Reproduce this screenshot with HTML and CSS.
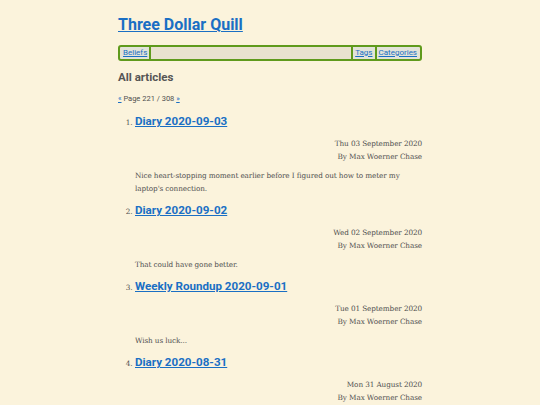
FILE: index.html
```html
<!DOCTYPE html>
<html>
<head>
<meta charset="utf-8">
<link rel="stylesheet" href="styles.css">
</head>
<body>
<div class="page">
  <h1 class="site-title"><a href="#">Three Dollar Quill</a></h1>
  <nav class="nav">
    <a href="#" class="nav-link">Beliefs</a>
    <span class="nav-fill"></span>
    <a href="#" class="nav-link">Tags</a>
    <a href="#" class="nav-link">Categories</a>
  </nav>
  <h2 class="section-title">All articles</h2>
  <p class="pager"><a href="#">«</a> Page 221 / 308 <a href="#">»</a></p>
  <ol class="articles">
    <li class="article">
      <h3 class="article-title"><a href="#">Diary 2020-09-03</a></h3>
      <div class="meta">Thu 03 September 2020<br>By Max Woerner Chase</div>
      <p class="summary">Nice heart-stopping moment earlier before I figured out how to meter my laptop's connection.</p>
    </li>
    <li class="article">
      <h3 class="article-title"><a href="#">Diary 2020-09-02</a></h3>
      <div class="meta">Wed 02 September 2020<br>By Max Woerner Chase</div>
      <p class="summary">That could have gone better.</p>
    </li>
    <li class="article">
      <h3 class="article-title"><a href="#">Weekly Roundup 2020-09-01</a></h3>
      <div class="meta">Tue 01 September 2020<br>By Max Woerner Chase</div>
      <p class="summary">Wish us luck...</p>
    </li>
    <li class="article">
      <h3 class="article-title"><a href="#">Diary 2020-08-31</a></h3>
      <div class="meta">Mon 31 August 2020<br>By Max Woerner Chase</div>
      <p class="summary">Already looking forward to tomorrow.</p>
    </li>
  </ol>
</div>
</body>
</html>
```

FILE: styles.css
```css
html, body {
  margin: 0;
  padding: 0;
  background: #fbf3dc;
}
body {
  font-family: "DejaVu Serif", serif;
  color: #505050;
}
.page {
  width: 304px;
  margin: 0 auto;
  padding-top: 14px;
}
a {
  color: #1a6fc4;
}
.site-title {
  font-family: Roboto, sans-serif;
  font-weight: 700;
  font-size: 16px;
  line-height: 22px;
  margin: 0 0 9px 0;
}
.nav {
  display: flex;
  align-items: stretch;
  border: 2px solid #5f9a1c;
  border-radius: 3px;
  background: #e9e2cf;
  height: 12px;
  font-family: Roboto, sans-serif;
  font-size: 8px;
  line-height: 12px;
  padding: 0 1px;
}
.nav-link {
  padding: 0 2px;
  background: #e2e3d9;
}
.nav-link + .nav-fill,
.nav-fill + .nav-link,
.nav-link + .nav-link {
  border-left: 2px solid #5f9a1c;
}
.nav-fill {
  flex: 1;
}
.section-title {
  font-family: Roboto, sans-serif;
  font-weight: 700;
  font-size: 11.5px;
  line-height: 16px;
  margin: 8px 0 0 0;
  color: #555;
}
.pager {
  font-family: Roboto, sans-serif;
  font-size: 7.5px;
  line-height: 12px;
  margin: 8px 0 0 0;
}
.articles {
  margin: 8px 0 0 0;
  padding-left: 17px;
  font-size: 7.3px;
}
.article-title {
  font-family: Roboto, sans-serif;
  font-weight: 700;
  font-size: 11.6px;
  line-height: 16px;
  margin: 0;
}
.meta {
  text-align: right;
  font-size: 7.3px;
  letter-spacing: -0.12px;
  line-height: 13px;
  margin-top: 7.5px;
}
.summary {
  font-size: 7.3px;
  letter-spacing: -0.12px;
  line-height: 13px;
  margin: 6px 0 7.5px 0;
}
```
